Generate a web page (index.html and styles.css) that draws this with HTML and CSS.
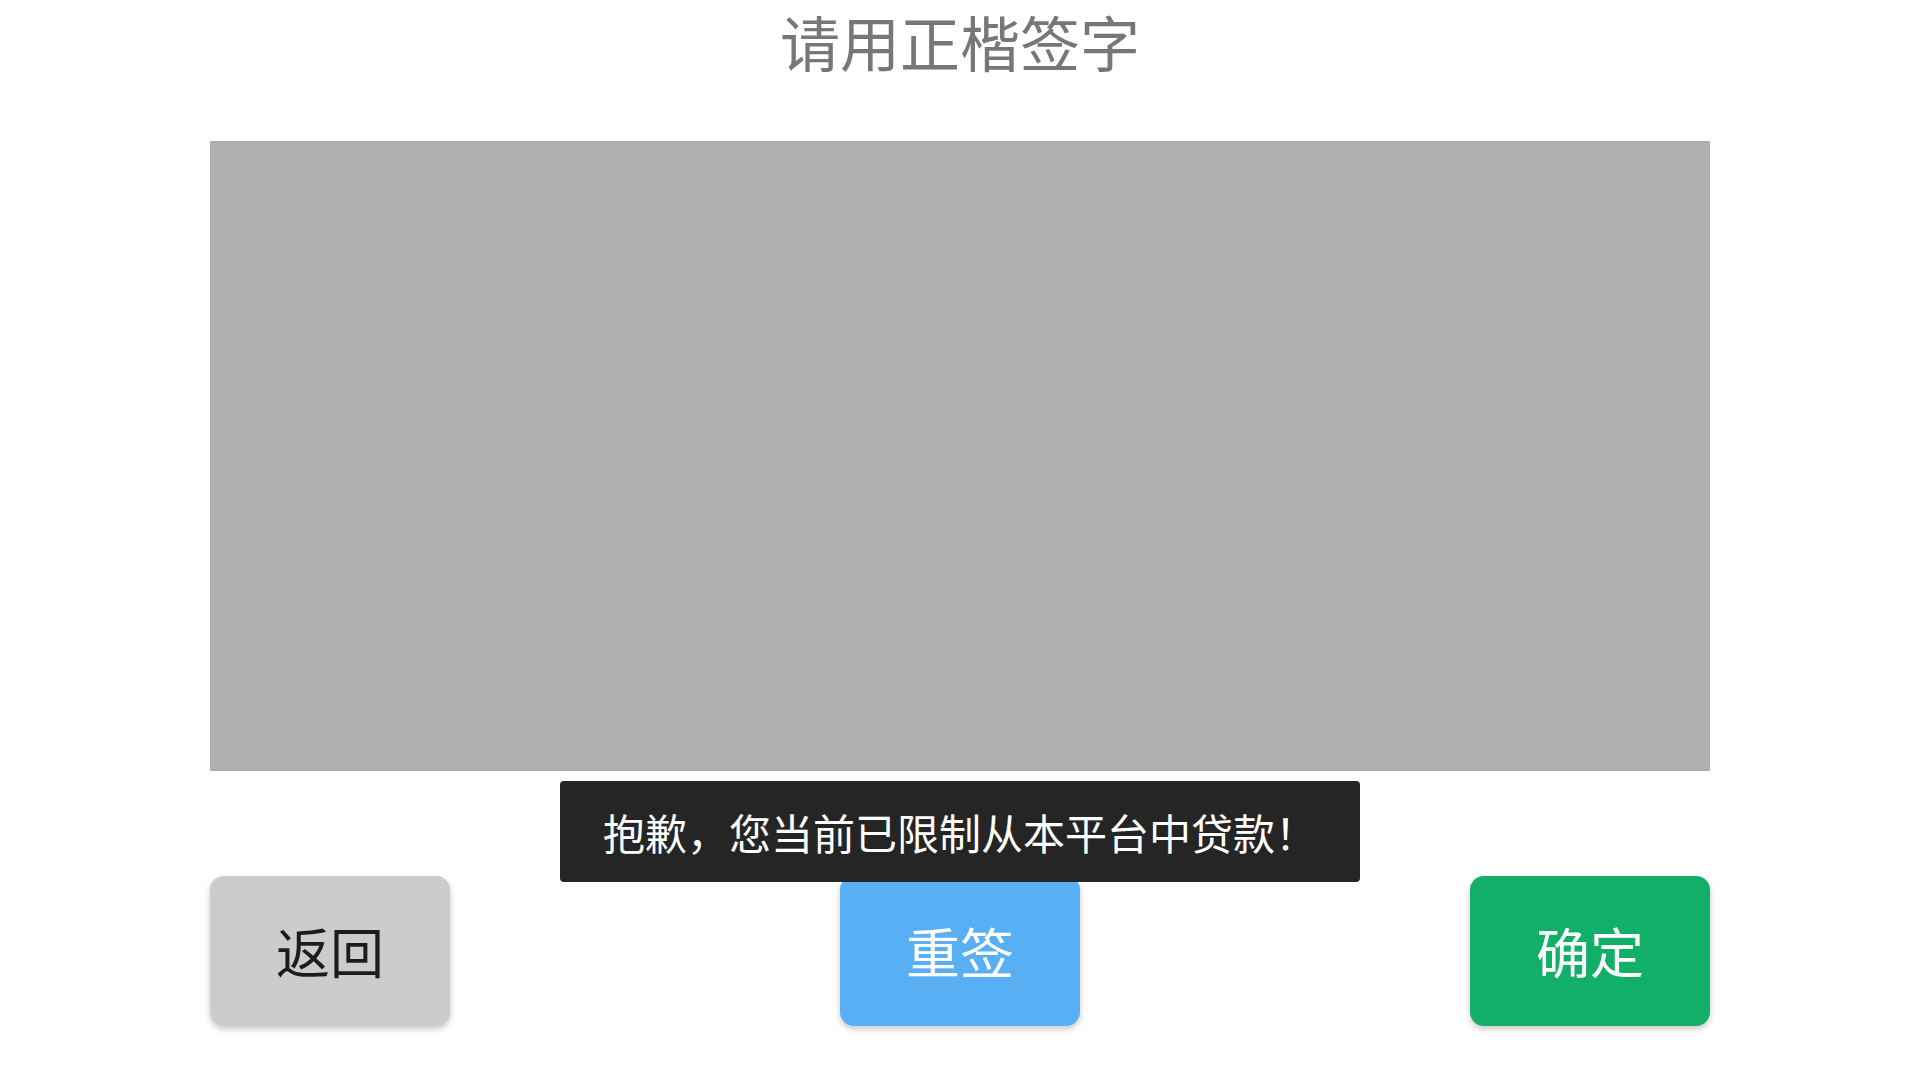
FILE: index.html
```html
<!DOCTYPE html>
<html lang="zh-CN">
<head>
<meta charset="utf-8">
<title>请用正楷签字</title>
<link rel="stylesheet" href="styles.css">
</head>
<body>
<div class="page">
  <h1 class="title">请用正楷签字</h1>
  <div class="pad"></div>
  <div class="actions">
    <button class="btn btn-back">返回</button>
    <button class="btn btn-reset">重签</button>
    <button class="btn btn-ok">确定</button>
  </div>
  <div class="toast">抱歉，您当前已限制从本平台中贷款！</div>
</div>
</body>
</html>
```
FILE: styles.css
```css
html, body {
  margin: 0;
  padding: 0;
  background: #ffffff;
}
body {
  font-family: "Noto Sans CJK SC", "Noto Sans", sans-serif;
}
.page {
  position: relative;
  width: 1920px;
  height: 1080px;
  display: flex;
  flex-direction: column;
  align-items: center;
}
.title {
  margin: 11px 0 0 0;
  font-size: 60px;
  line-height: 60px;
  font-weight: 400;
  color: #777777;
  text-align: center;
}
.pad {
  margin-top: 70px;
  width: 1500px;
  height: 630px;
  background: #afafaf;
}
.actions {
  margin-top: 105px;
  width: 1500px;
  display: flex;
  justify-content: space-between;
}
.btn {
  width: 240px;
  height: 150px;
  border: none;
  border-radius: 14px;
  font-family: "Noto Sans CJK SC", "Noto Sans", sans-serif;
  font-size: 54px;
  line-height: 54px;
  padding: 0;
  box-shadow: 0 3px 6px rgba(0, 0, 0, 0.22);
  cursor: pointer;
}
.btn-back {
  background: #cccccc;
  color: #1c1c1c;
}
.btn-reset {
  background: #58aff3;
  color: #ffffff;
}
.btn-ok {
  background: #12af68;
  color: #ffffff;
}
.toast {
  position: absolute;
  top: 781px;
  left: 50%;
  transform: translateX(-50%);
  height: 101px;
  padding: 0 43px;
  display: flex;
  align-items: center;
  background: #252525;
  color: #ffffff;
  border-radius: 4px;
  font-size: 42px;
  white-space: nowrap;
}
```
